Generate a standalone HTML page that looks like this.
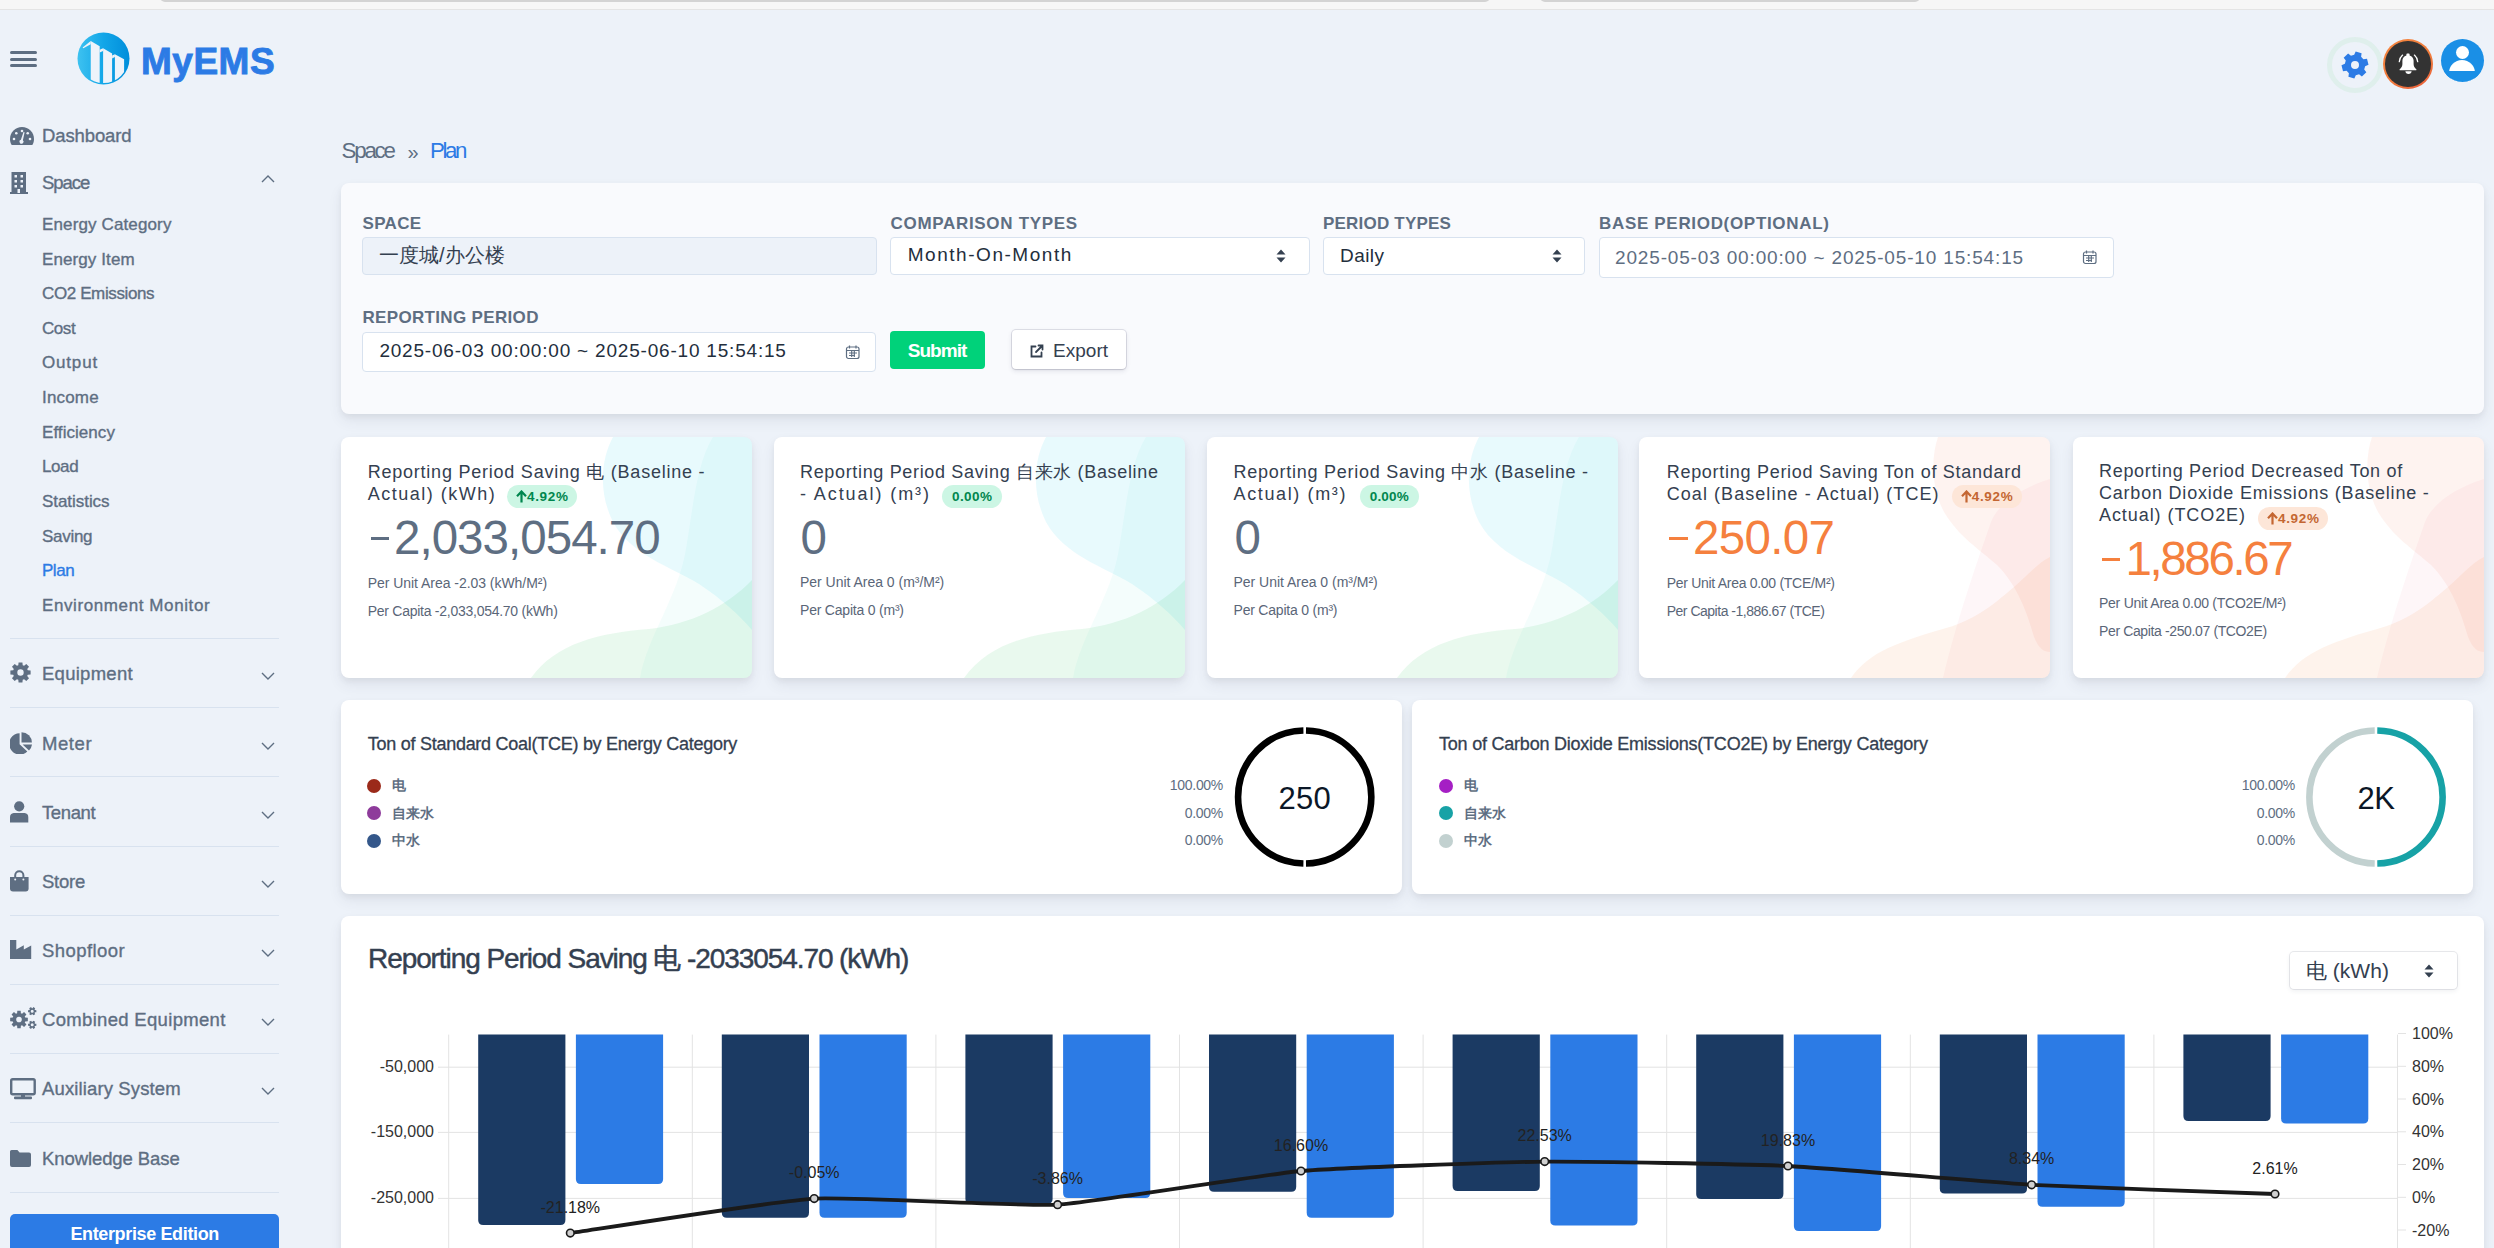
<!DOCTYPE html><html><head><meta charset="utf-8"><title>MyEMS</title><style>
*{box-sizing:border-box;margin:0;padding:0}
html,body{width:2494px;height:1248px;overflow:hidden;background:#edf2f9;font-family:"Liberation Sans",sans-serif;color:#344050}
.a{position:absolute}
.t{position:absolute;white-space:nowrap;line-height:1}
.tb{position:absolute;top:-3px;height:5px;background:#d3d3d3;border-radius:0 0 7px 7px}
.sd{position:absolute;white-space:nowrap;line-height:1;color:#5e6e82;font-size:17px;-webkit-text-stroke:0.35px currentColor}
.sep{position:absolute;left:10px;width:269px;height:1px;background:#d8e2ef}
.card{position:absolute;background:#fff;border-radius:8px;box-shadow:0 7px 14px 0 rgba(65,69,88,.08),0 3px 6px 0 rgba(0,0,0,.05)}
.lbl{position:absolute;white-space:nowrap;line-height:1;font-size:17px;font-weight:bold;color:#5e6e82;letter-spacing:0.6px}
.inp{position:absolute;border:1px solid #d8e2ef;border-radius:4px;background:#fff}
.chev{position:absolute;width:9px;height:9px;border-right:1.5px solid #5e6e82;border-bottom:1.5px solid #5e6e82}
</style></head><body>
<div class="a" style="left:0;top:0;width:2494px;height:10px;background:#f6f6f6;border-bottom:1px solid #e4e4e4"></div>
<div class="tb" style="left:160px;width:1330px"></div>
<div class="tb" style="left:1540px;width:380px"></div>
<div class="a" style="left:10px;top:51px;width:27px;height:3px;border-radius:2px;background:#5d6e82"></div>
<div class="a" style="left:10px;top:57.5px;width:27px;height:3px;border-radius:2px;background:#5d6e82"></div>
<div class="a" style="left:10px;top:64px;width:27px;height:3px;border-radius:2px;background:#5d6e82"></div>
<svg class="a" style="left:77px;top:32px" width="53" height="53" viewBox="0 0 53 53">
<defs><linearGradient id="lg" x1="0" y1="0" x2="1" y2="0"><stop offset="0" stop-color="#3ec2f0"/><stop offset="0.5" stop-color="#12a6e8"/><stop offset="1" stop-color="#008edb"/></linearGradient>
<clipPath id="cc"><circle cx="26.5" cy="26.5" r="24.6"/></clipPath></defs>
<circle cx="26.5" cy="26.5" r="26" fill="url(#lg)"/>
<g clip-path="url(#cc)" fill="#eef3fa">
<path d="M5.6 15.6 L13.75 9 V12.2 L6.4 16.2 Z"/>
<path d="M13.75 9 L22.7 14.3 V60 H13.75 Z"/>
<path d="M22.7 17.7 L26.1 16.3 V18.9 L22.7 20.5 Z"/>
<path d="M26.1 16.3 L35.1 21.6 V60 H26.1 Z"/>
<path d="M35.1 23.6 L37.9 22.2 V25 L35.1 26.4 Z"/>
<path d="M37.9 22.2 L47.1 27.2 V60 H37.9 Z"/>
</g></svg>
<div class="t" style="left:141px;top:43px;font-size:37px;font-weight:bold;color:#2c7be5;letter-spacing:0.5px;-webkit-text-stroke:0.9px #2c7be5">MyEMS</div>
<div class="a" style="left:2327px;top:36.5px;width:56px;height:56px;border-radius:50%;border:5px solid #dfefec"></div>

<svg class="a" style="left:2341px;top:50.5px" width="28" height="28" viewBox="0 0 28 28"><path fill="#2c7be5" fill-rule="evenodd" d="M13.19 3.83 L14.67 0.52 L20.59 2.22 L20.09 5.82 L22.40 8.21 L26.01 7.84 L27.50 13.82 L24.13 15.18 L23.21 18.38 L25.34 21.32 L20.90 25.60 L18.04 23.37 L14.81 24.17 L13.33 27.48 L7.41 25.78 L7.91 22.18 L5.60 19.79 L1.99 20.16 L0.50 14.18 L3.87 12.82 L4.79 9.62 L2.66 6.68 L7.10 2.40 L9.96 4.63Z M18.00 14.00 A4 4 0 1 0 10.00 14.00 A4 4 0 1 0 18.00 14.00Z"/></svg>

<div class="a" style="left:2383px;top:39px;width:50px;height:50px;border-radius:50%;background:linear-gradient(150deg,#f5863e 0%,#f07a3c 60%,#e85a3a 100%);"></div>
<div class="a" style="left:2385.2px;top:41.2px;width:45.6px;height:45.6px;border-radius:50%;background:#333"></div>
<svg class="a" style="left:2398px;top:53px" width="22" height="22" viewBox="0 0 22 22">
<path fill="#fff" d="M10.5 0.6c.7 0 1.1.4 1.1 1v.9c2.5.6 4 2.8 4 5.3v3.2c0 1.7.7 3.2 1.9 4.4l.8.8c.4.5.1 1.1-.5 1.1H2.2c-.6 0-.9-.6-.5-1.1l.8-.8c1.200-1.200 1.900-2.700 1.900-4.400V7.800c0-2.500 1.500-4.700 4-5.300v-.9c0-.6.4-1 1.1-1z"/>
<path fill="#fff" d="M7.400 18.300h6.200c0 1.500-1.400 2.700-3.100 2.700s-3.100-1.200-3.100-2.700z"/>
<path fill="none" stroke="#fff" stroke-width="1.3" stroke-linecap="round" d="M1.300 8.700c.2-2.600 1.400-4.900 3.300-6.600M19.700 8.700c-.2-2.600-1.400-4.900-3.300-6.600"/>
</svg>
<div class="a" style="left:2440.5px;top:38.5px;width:43px;height:43px;border-radius:50%;background:#1a8fe6;overflow:hidden">
<div class="a" style="left:15px;top:7px;width:13px;height:13px;border-radius:50%;background:#fff"></div>
<div class="a" style="left:8.5px;top:21.5px;width:26px;height:26px;border-radius:50%;background:#fff"></div>
<div class="a" style="left:0;top:32.5px;width:43px;height:12px;background:#1a8fe6"></div>
</div>
<div class="sd" style="left:42px;top:127.3px;font-size:18.5px;color:#5e6e82;font-weight:normal;letter-spacing:-0.11px">Dashboard</div>
<div class="sd" style="left:42px;top:173.6px;font-size:18.5px;color:#5e6e82;font-weight:normal;letter-spacing:-1.03px">Space</div>
<div class="sd" style="left:42px;top:215.9px;font-size:17px;color:#5e6e82;font-weight:normal;letter-spacing:0.13px">Energy Category</div>
<div class="sd" style="left:42px;top:250.5px;font-size:17px;color:#5e6e82;font-weight:normal;letter-spacing:0.10px">Energy Item</div>
<div class="sd" style="left:42px;top:285.1px;font-size:17px;color:#5e6e82;font-weight:normal;letter-spacing:-0.38px">CO2 Emissions</div>
<div class="sd" style="left:42px;top:319.8px;font-size:17px;color:#5e6e82;font-weight:normal;letter-spacing:-0.45px">Cost</div>
<div class="sd" style="left:42px;top:354.4px;font-size:17px;color:#5e6e82;font-weight:normal;letter-spacing:0.82px">Output</div>
<div class="sd" style="left:42px;top:389.0px;font-size:17px;color:#5e6e82;font-weight:normal;letter-spacing:0.17px">Income</div>
<div class="sd" style="left:42px;top:423.6px;font-size:17px;color:#5e6e82;font-weight:normal;letter-spacing:0.05px">Efficiency</div>
<div class="sd" style="left:42px;top:458.2px;font-size:17px;color:#5e6e82;font-weight:normal;letter-spacing:-0.40px">Load</div>
<div class="sd" style="left:42px;top:492.9px;font-size:17px;color:#5e6e82;font-weight:normal;letter-spacing:-0.05px">Statistics</div>
<div class="sd" style="left:42px;top:527.5px;font-size:17px;color:#5e6e82;font-weight:normal;letter-spacing:-0.28px">Saving</div>
<div class="sd" style="left:42px;top:562.1px;font-size:17px;color:#2c7be5;font-weight:normal;letter-spacing:-0.48px">Plan</div>
<div class="sd" style="left:42px;top:596.7px;font-size:17px;color:#5e6e82;font-weight:normal;letter-spacing:0.60px">Environment Monitor</div>
<svg class="a" style="left:10px;top:126px" width="24" height="20" viewBox="0 0 24 20"><path fill="#5e6e82" d="M12 1C5.4 1 0 6.400 0 13c0 2.200.6 4.300 1.700 6h20.600c1.100-1.700 1.700-3.800 1.700-6 0-6.600-5.400-12-12-12z"/>
<g fill="#edf2f9"><circle cx="4" cy="13" r="1.3"/><circle cx="6.3" cy="7.3" r="1.3"/><circle cx="12" cy="5" r="1.3"/><circle cx="20" cy="13" r="1.3"/><circle cx="17.7" cy="7.3" r="1.3"/><path d="M14.600 6.200 L12.900 14.200 a2 2 0 1 1 -2-.4 L13.500 5.900z"/></g></svg>
<svg class="a" style="left:10px;top:172px" width="18" height="22" viewBox="0 0 18 22"><path fill="#5e6e82" d="M1.500 0h14.500v21H1.500z"/><rect x="0" y="20" width="18" height="2" fill="#5e6e82"/>
<g fill="#edf2f9"><rect x="4.5" y="3" width="2.5" height="2.5"/><rect x="10.5" y="3" width="2.5" height="2.5"/><rect x="4.5" y="8" width="2.5" height="2.5"/><rect x="10.5" y="8" width="2.5" height="2.5"/><rect x="4.5" y="13" width="2.5" height="2.5"/><rect x="10.5" y="13" width="2.5" height="2.5"/><rect x="7.5" y="17" width="2.5" height="4"/></g></svg>
<svg class="a" style="left:260px;top:172px" width="16" height="12" viewBox="0 0 16 12"><path d="M2 10 L8 4 L14 10" fill="none" stroke="#5e6e82" stroke-width="1.4"/></svg>
<div class="sep" style="top:638.4px"></div>
<div class="sep" style="top:707.0px"></div>
<div class="sep" style="top:776.0px"></div>
<div class="sep" style="top:845.8px"></div>
<div class="sep" style="top:915.0px"></div>
<div class="sep" style="top:984.0px"></div>
<div class="sep" style="top:1053.0px"></div>
<div class="sep" style="top:1122.0px"></div>
<div class="sep" style="top:1192.0px"></div>
<div class="sd" style="left:42px;top:665.3px;font-size:18.5px;color:#5e6e82;font-weight:normal;letter-spacing:0.27px">Equipment</div>
<svg class="a" style="left:260px;top:670.1px" width="16" height="12" viewBox="0 0 16 12"><path d="M2 3 L8 9 L14 3" fill="none" stroke="#5e6e82" stroke-width="1.4"/></svg>
<div class="sd" style="left:42px;top:734.7px;font-size:18.5px;color:#5e6e82;font-weight:normal;letter-spacing:0.58px">Meter</div>
<svg class="a" style="left:260px;top:739.5px" width="16" height="12" viewBox="0 0 16 12"><path d="M2 3 L8 9 L14 3" fill="none" stroke="#5e6e82" stroke-width="1.4"/></svg>
<div class="sd" style="left:42px;top:803.7px;font-size:18.5px;color:#5e6e82;font-weight:normal;letter-spacing:-0.39px">Tenant</div>
<svg class="a" style="left:260px;top:808.5px" width="16" height="12" viewBox="0 0 16 12"><path d="M2 3 L8 9 L14 3" fill="none" stroke="#5e6e82" stroke-width="1.4"/></svg>
<div class="sd" style="left:42px;top:872.7px;font-size:18.5px;color:#5e6e82;font-weight:normal;letter-spacing:-0.25px">Store</div>
<svg class="a" style="left:260px;top:877.5px" width="16" height="12" viewBox="0 0 16 12"><path d="M2 3 L8 9 L14 3" fill="none" stroke="#5e6e82" stroke-width="1.4"/></svg>
<div class="sd" style="left:42px;top:941.7px;font-size:18.5px;color:#5e6e82;font-weight:normal;letter-spacing:0.43px">Shopfloor</div>
<svg class="a" style="left:260px;top:946.5px" width="16" height="12" viewBox="0 0 16 12"><path d="M2 3 L8 9 L14 3" fill="none" stroke="#5e6e82" stroke-width="1.4"/></svg>
<div class="sd" style="left:42px;top:1010.7px;font-size:18.5px;color:#5e6e82;font-weight:normal;letter-spacing:0.32px">Combined Equipment</div>
<svg class="a" style="left:260px;top:1015.5px" width="16" height="12" viewBox="0 0 16 12"><path d="M2 3 L8 9 L14 3" fill="none" stroke="#5e6e82" stroke-width="1.4"/></svg>
<div class="sd" style="left:42px;top:1079.7px;font-size:18.5px;color:#5e6e82;font-weight:normal;letter-spacing:0.13px">Auxiliary System</div>
<svg class="a" style="left:260px;top:1084.5px" width="16" height="12" viewBox="0 0 16 12"><path d="M2 3 L8 9 L14 3" fill="none" stroke="#5e6e82" stroke-width="1.4"/></svg>
<div class="sd" style="left:42px;top:1149.7px;font-size:18.5px;color:#5e6e82;font-weight:normal;letter-spacing:-0.09px">Knowledge Base</div>
<div class="t" style="left:341.5px;top:139.9px;font-size:22.3px;color:#5e6e82;letter-spacing:-2.19px;">Space</div>
<div class="t" style="left:407.5px;top:141.9px;font-size:20px;color:#5e6e82;letter-spacing:0.00px;">»</div>
<div class="t" style="left:430px;top:139.9px;font-size:22.3px;color:#2c7be5;letter-spacing:-2.45px;">Plan</div>
<div class="card" style="left:341px;top:183px;width:2143px;height:231px;background:#f9fafd"></div>
<div class="t" style="left:362.5px;top:214.6px;font-size:17px;color:#5e6e82;font-weight:bold;letter-spacing:0.35px;">SPACE</div>
<div class="t" style="left:890.5px;top:214.6px;font-size:17px;color:#5e6e82;font-weight:bold;letter-spacing:0.69px;">COMPARISON TYPES</div>
<div class="t" style="left:1323px;top:214.6px;font-size:17px;color:#5e6e82;font-weight:bold;letter-spacing:0.21px;">PERIOD TYPES</div>
<div class="t" style="left:1599px;top:214.6px;font-size:17px;color:#5e6e82;font-weight:bold;letter-spacing:0.68px;">BASE PERIOD(OPTIONAL)</div>
<div class="t" style="left:362.5px;top:308.6px;font-size:17px;color:#5e6e82;font-weight:bold;letter-spacing:0.33px;">REPORTING PERIOD</div>
<div class="inp" style="left:362px;top:237px;width:515px;height:38px;background:#edf2f9;border-color:#d8e2ef"></div>
<div class="t" style="left:379px;top:245.1px;font-size:20px;color:#344050;letter-spacing:0.00px;">一度城/办公楼</div>
<div class="inp" style="left:890px;top:237px;width:420px;height:38px"></div>
<div class="t" style="left:907.7px;top:244.8px;font-size:19px;color:#232e3c;letter-spacing:1.54px;">Month-On-Month</div>
<div class="inp" style="left:1323px;top:237px;width:262px;height:38px"></div>
<div class="t" style="left:1340px;top:245.7px;font-size:19px;color:#232e3c;letter-spacing:0.45px;">Daily</div>
<svg class="a" style="left:1275px;top:247.5px" width="12" height="16" viewBox="0 0 12 16"><path d="M6 1.5 L10.5 6.5 H1.5Z M6 14.5 L10.5 9.5 H1.5Z" fill="#344050"/></svg>
<svg class="a" style="left:1551px;top:247.5px" width="12" height="16" viewBox="0 0 12 16"><path d="M6 1.5 L10.5 6.5 H1.5Z M6 14.5 L10.5 9.5 H1.5Z" fill="#344050"/></svg>
<div class="inp" style="left:1599px;top:237px;width:515px;height:41px;border-color:#d8e2ef"></div>
<div class="t" style="left:1615px;top:248.2px;font-size:19px;color:#5e6e82;letter-spacing:0.84px;">2025-05-03 00:00:00 ~ 2025-05-10 15:54:15</div>
<svg class="a" style="left:2082px;top:249px" width="16" height="16" viewBox="0 0 16 16"><g fill="none" stroke="#5e6e82" stroke-width="1.2"><rect x="1.5" y="3" width="12.5" height="11.5" rx="2"/><path d="M1.5 6.5H14M4.5 1.5v3M11 1.5v3M4 9h8M4 11.5h6M6.7 7v6M9.3 7v6"/></g></svg>
<div class="inp" style="left:362px;top:332px;width:514px;height:40px"></div>
<div class="t" style="left:379.4px;top:340.9px;font-size:19px;color:#232e3c;letter-spacing:0.80px;">2025-06-03 00:00:00 ~ 2025-06-10 15:54:15</div>
<svg class="a" style="left:845px;top:344px" width="16" height="16" viewBox="0 0 16 16"><g fill="none" stroke="#5e6e82" stroke-width="1.2"><rect x="1.5" y="3" width="12.5" height="11.5" rx="2"/><path d="M1.5 6.5H14M4.5 1.5v3M11 1.5v3M4 9h8M4 11.5h6M6.7 7v6M9.3 7v6"/></g></svg>
<div class="a" style="left:890px;top:331px;width:95px;height:38px;border-radius:4px;background:#00d27a"></div>
<div class="t" style="left:907.7px;top:340.9px;font-size:19px;color:#fff;font-weight:bold;letter-spacing:-0.96px;">Submit</div>
<div class="a" style="left:1011.5px;top:330px;width:114px;height:39px;border-radius:4px;background:#fff;box-shadow:0 0 0 1px rgba(43,45,80,.12),0 2px 5px 0 rgba(43,45,80,.12),0 1px 1.5px 0 rgba(0,0,0,.07)"></div>
<svg class="a" style="left:1029px;top:343px" width="16" height="16" viewBox="0 0 16 16"><g fill="none" stroke="#344050" stroke-width="1.8" stroke-linecap="round"><path d="M12.5 9.5v4H2.5v-10h4"/><path d="M9.5 2.5h4v4M13.5 2.5L7 9"/></g></svg>
<div class="t" style="left:1053px;top:340.9px;font-size:19px;color:#344050;letter-spacing:0.02px;">Export</div>
<div class="card" style="left:341.2px;top:437px;width:411px;height:241px;overflow:hidden"><svg class="a" style="left:0;top:0" width="411" height="241" viewBox="0 0 411 241">
<path d="M272 0 C260 22 257 55 272 85 C290 118 330 130 358 147 C382 163 398 178 411 193 V0Z" fill="rgb(0,200,230)" fill-opacity="0.09"/>
<path d="M372 0 C356 25 352 70 345 112 C337 160 306 200 299 241 H411 V0Z" fill="rgb(0,200,190)" fill-opacity="0.045"/>
<path d="M190 241 C215 206 258 196 308 192 C350 187 385 170 411 143 V241Z" fill="rgb(40,200,90)" fill-opacity="0.10"/>
</svg></div>
<div class="card" style="left:773.7px;top:437px;width:411px;height:241px;overflow:hidden"><svg class="a" style="left:0;top:0" width="411" height="241" viewBox="0 0 411 241">
<path d="M272 0 C260 22 257 55 272 85 C290 118 330 130 358 147 C382 163 398 178 411 193 V0Z" fill="rgb(0,200,230)" fill-opacity="0.09"/>
<path d="M372 0 C356 25 352 70 345 112 C337 160 306 200 299 241 H411 V0Z" fill="rgb(0,200,190)" fill-opacity="0.045"/>
<path d="M190 241 C215 206 258 196 308 192 C350 187 385 170 411 143 V241Z" fill="rgb(40,200,90)" fill-opacity="0.10"/>
</svg></div>
<div class="card" style="left:1207px;top:437px;width:411px;height:241px;overflow:hidden"><svg class="a" style="left:0;top:0" width="411" height="241" viewBox="0 0 411 241">
<path d="M272 0 C260 22 257 55 272 85 C290 118 330 130 358 147 C382 163 398 178 411 193 V0Z" fill="rgb(0,200,230)" fill-opacity="0.09"/>
<path d="M372 0 C356 25 352 70 345 112 C337 160 306 200 299 241 H411 V0Z" fill="rgb(0,200,190)" fill-opacity="0.045"/>
<path d="M190 241 C215 206 258 196 308 192 C350 187 385 170 411 143 V241Z" fill="rgb(40,200,90)" fill-opacity="0.10"/>
</svg></div>
<div class="card" style="left:1639px;top:437px;width:411px;height:241px;overflow:hidden"><svg class="a" style="left:0;top:0" width="411" height="241" viewBox="0 0 411 241">
<path d="M299 0 C292 20 292 50 305 75 C320 100 340 112 358 128 C378 148 388 175 395 200 C400 212 405 215 411 215 V0Z" fill="rgb(245,120,90)" fill-opacity="0.09"/>
<path d="M411 42 C385 50 360 65 352 85 C340 120 320 175 304 241 H411Z" fill="rgb(240,90,130)" fill-opacity="0.055"/>
<path d="M212 241 C230 215 258 205 314 189 C345 178 365 158 375 150 C390 137 400 125 411 120 V241Z" fill="rgb(250,150,80)" fill-opacity="0.11"/>
</svg></div>
<div class="card" style="left:2072.5px;top:437px;width:411px;height:241px;overflow:hidden"><svg class="a" style="left:0;top:0" width="411" height="241" viewBox="0 0 411 241">
<path d="M299 0 C292 20 292 50 305 75 C320 100 340 112 358 128 C378 148 388 175 395 200 C400 212 405 215 411 215 V0Z" fill="rgb(245,120,90)" fill-opacity="0.09"/>
<path d="M411 42 C385 50 360 65 352 85 C340 120 320 175 304 241 H411Z" fill="rgb(240,90,130)" fill-opacity="0.055"/>
<path d="M212 241 C230 215 258 205 314 189 C345 178 365 158 375 150 C390 137 400 125 411 120 V241Z" fill="rgb(250,150,80)" fill-opacity="0.11"/>
</svg></div>
<div class="t" style="left:367.7px;top:462.6px;font-size:18px;color:#344050;letter-spacing:0.77px;">Reporting Period Saving 电 (Baseline -</div>
<div class="t" style="left:367.7px;top:485.3px;font-size:18px;color:#344050;letter-spacing:1.50px;">Actual) (kWh)</div>
<div class="a" style="left:507px;top:485px;width:70px;height:23px;border-radius:11.5px;background:#ccf6e4"></div>
<svg class="a" style="left:516px;top:490px" width="11" height="13" viewBox="0 0 11 13"><path d="M5.5 12.5V2M1 6.2L5.5 1.5L10 6.2" fill="none" stroke="#00864e" stroke-width="2.2" stroke-linejoin="miter"/></svg>
<div class="t" style="left:527px;top:490.1px;font-size:13.5px;color:#00864e;font-weight:bold;letter-spacing:0.68px;">4.92%</div>
<div class="a" style="left:371px;top:536.5px;width:17.6px;height:3.2px;background:#5e6e82"></div>
<div class="t" style="left:394px;top:514.1px;font-size:47.5px;color:#5e6e82;letter-spacing:-0.97px;">2,033,054.70</div>
<div class="t" style="left:367.7px;top:575.6px;font-size:14px;color:#5a6678;letter-spacing:-0.04px;">Per Unit Area -2.03 (kWh/M²)</div>
<div class="t" style="left:367.7px;top:603.5px;font-size:14px;color:#5a6678;letter-spacing:-0.26px;">Per Capita -2,033,054.70 (kWh)</div>
<div class="t" style="left:800px;top:462.6px;font-size:18px;color:#344050;letter-spacing:0.66px;">Reporting Period Saving 自来水 (Baseline</div>
<div class="t" style="left:800px;top:485.3px;font-size:18px;color:#344050;letter-spacing:1.92px;">- Actual) (m³)</div>
<div class="a" style="left:942px;top:485px;width:60px;height:23px;border-radius:11.5px;background:#ccf6e4"></div>
<div class="t" style="left:952px;top:490.1px;font-size:13.5px;color:#00864e;font-weight:bold;letter-spacing:0.43px;">0.00%</div>
<div class="t" style="left:800.6px;top:514.1px;font-size:47.5px;color:#5e6e82;letter-spacing:-1.92px;">0</div>
<div class="t" style="left:800px;top:575.2px;font-size:14px;color:#5a6678;letter-spacing:-0.02px;">Per Unit Area 0 (m³/M²)</div>
<div class="t" style="left:800px;top:603.2px;font-size:14px;color:#5a6678;letter-spacing:-0.21px;">Per Capita 0 (m³)</div>
<div class="t" style="left:1233.5px;top:462.6px;font-size:18px;color:#344050;letter-spacing:0.74px;">Reporting Period Saving 中水 (Baseline -</div>
<div class="t" style="left:1233.5px;top:485.3px;font-size:18px;color:#344050;letter-spacing:1.63px;">Actual) (m³)</div>
<div class="a" style="left:1359.7px;top:485px;width:59px;height:23px;border-radius:11.5px;background:#ccf6e4"></div>
<div class="t" style="left:1369.7px;top:490.1px;font-size:13.5px;color:#00864e;font-weight:bold;letter-spacing:0.18px;">0.00%</div>
<div class="t" style="left:1234.5px;top:514.1px;font-size:47.5px;color:#5e6e82;letter-spacing:-1.92px;">0</div>
<div class="t" style="left:1233.5px;top:575.2px;font-size:14px;color:#5a6678;letter-spacing:-0.02px;">Per Unit Area 0 (m³/M²)</div>
<div class="t" style="left:1233.5px;top:603.2px;font-size:14px;color:#5a6678;letter-spacing:-0.21px;">Per Capita 0 (m³)</div>
<div class="t" style="left:1666.7px;top:462.6px;font-size:18px;color:#344050;letter-spacing:0.72px;">Reporting Period Saving Ton of Standard</div>
<div class="t" style="left:1666.7px;top:485.3px;font-size:18px;color:#344050;letter-spacing:1.06px;">Coal (Baseline - Actual) (TCE)</div>
<div class="a" style="left:1951.7px;top:485px;width:70px;height:23px;border-radius:11.5px;background:#fde6d8"></div>
<svg class="a" style="left:1960.7px;top:490px" width="11" height="13" viewBox="0 0 11 13"><path d="M5.5 12.5V2M1 6.2L5.5 1.5L10 6.2" fill="none" stroke="#c46632" stroke-width="2.2" stroke-linejoin="miter"/></svg>
<div class="t" style="left:1971.7px;top:490.1px;font-size:13.5px;color:#c46632;font-weight:bold;letter-spacing:0.68px;">4.92%</div>
<div class="a" style="left:1669px;top:536.5px;width:19.0px;height:3.2px;background:#f5803e"></div>
<div class="t" style="left:1693px;top:514.1px;font-size:47.5px;color:#f5803e;letter-spacing:-0.66px;">250.07</div>
<div class="t" style="left:1666.7px;top:575.6px;font-size:14px;color:#5a6678;letter-spacing:-0.29px;">Per Unit Area 0.00 (TCE/M²)</div>
<div class="t" style="left:1666.7px;top:603.5px;font-size:14px;color:#5a6678;letter-spacing:-0.49px;">Per Capita -1,886.67 (TCE)</div>
<div class="t" style="left:2099px;top:461.8px;font-size:18px;color:#344050;letter-spacing:0.70px;">Reporting Period Decreased Ton of</div>
<div class="t" style="left:2099px;top:483.6px;font-size:18px;color:#344050;letter-spacing:0.79px;">Carbon Dioxide Emissions (Baseline -</div>
<div class="t" style="left:2099px;top:505.5px;font-size:18px;color:#344050;letter-spacing:0.93px;">Actual) (TCO2E)</div>
<div class="a" style="left:2258px;top:506.5px;width:70px;height:23px;border-radius:11.5px;background:#fde6d8"></div>
<svg class="a" style="left:2267px;top:511.5px" width="11" height="13" viewBox="0 0 11 13"><path d="M5.5 12.5V2M1 6.2L5.5 1.5L10 6.2" fill="none" stroke="#c46632" stroke-width="2.2" stroke-linejoin="miter"/></svg>
<div class="t" style="left:2278px;top:511.6px;font-size:13.5px;color:#c46632;font-weight:bold;letter-spacing:0.68px;">4.92%</div>
<div class="a" style="left:2101.5px;top:557.5px;width:18.5px;height:3.2px;background:#f5803e"></div>
<div class="t" style="left:2125.5px;top:535.1px;font-size:47.5px;color:#f5803e;letter-spacing:-2.39px;">1,886.67</div>
<div class="t" style="left:2099px;top:595.9px;font-size:14px;color:#5a6678;letter-spacing:-0.26px;">Per Unit Area 0.00 (TCO2E/M²)</div>
<div class="t" style="left:2099px;top:623.9px;font-size:14px;color:#5a6678;letter-spacing:-0.37px;">Per Capita -250.07 (TCO2E)</div>
<svg class="a" style="left:10px;top:661.5px" width="21" height="21" viewBox="0 0 21 21"><path fill="#5e6e82" fill-rule="evenodd" d="M17.77 8.29 L20.62 8.57 L20.62 12.43 L17.77 12.71 L17.20 14.08 L19.02 16.29 L16.29 19.02 L14.08 17.20 L12.71 17.77 L12.43 20.62 L8.57 20.62 L8.29 17.77 L6.92 17.20 L4.71 19.02 L1.98 16.29 L3.80 14.08 L3.23 12.71 L0.38 12.43 L0.38 8.57 L3.23 8.29 L3.80 6.92 L1.98 4.71 L4.71 1.98 L6.92 3.80 L8.29 3.23 L8.57 0.38 L12.43 0.38 L12.71 3.23 L14.08 3.80 L16.29 1.98 L19.02 4.71 L17.20 6.92Z M13.70 10.50 A3.2 3.2 0 1 0 7.30 10.50 A3.2 3.2 0 1 0 13.70 10.50Z"/></svg>
<svg class="a" style="left:10px;top:731.5px" width="23" height="22" viewBox="0 0 23 22"><path fill="#5e6e82" d="M9.6 1.2 V12.2 L17.3 19.6 A10.7 10.7 0 1 1 9.6 1.2Z"/><path fill="#5e6e82" d="M11.5 0.2 A10.4 10.4 0 0 1 21.9 10.6 H11.5Z"/><path fill="#5e6e82" d="M12.6 12.5 H22 A10.6 10.6 0 0 1 19 18.6Z"/></svg>
<svg class="a" style="left:10px;top:800.5px" width="19" height="22" viewBox="0 0 19 22"><circle cx="9.2" cy="5.3" r="5.1" fill="#5e6e82"/><path fill="#5e6e82" d="M3.8 12 H14.6 A4.3 4.3 0 0 1 18.3 16.3 V21.5 H0 V16.3 A4.3 4.3 0 0 1 3.8 12Z"/></svg>
<svg class="a" style="left:10px;top:869.5px" width="19" height="22" viewBox="0 0 19 22"><path fill="none" stroke="#5e6e82" stroke-width="2" d="M5.2 7.5 V5.3 A4.1 4.1 0 0 1 13.4 5.3 V7.5"/><path fill="#5e6e82" d="M0 7 H18.6 V18.5 A3 3 0 0 1 15.6 21.5 H3 A3 3 0 0 1 0 18.5Z"/><circle cx="5.2" cy="9.5" r="1" fill="#edf2f9"/><circle cx="13.4" cy="9.5" r="1" fill="#edf2f9"/></svg>
<svg class="a" style="left:10px;top:940px" width="22" height="20" viewBox="0 0 22 20"><path fill="#5e6e82" d="M0 0 H6.3 V9.5 L13.8 5.2 V9.5 L21.2 5.4 V19 H0Z"/></svg>
<svg class="a" style="left:10px;top:1007px" width="28" height="23" viewBox="0 0 28 23"><path fill="#5e6e82" fill-rule="evenodd" d="M15.22 10.61 L17.84 10.81 L17.84 14.19 L15.22 14.39 L14.73 15.56 L16.44 17.56 L14.06 19.94 L12.06 18.23 L10.89 18.72 L10.69 21.34 L7.31 21.34 L7.11 18.72 L5.94 18.23 L3.94 19.94 L1.56 17.56 L3.27 15.56 L2.78 14.39 L0.16 14.19 L0.16 10.81 L2.78 10.61 L3.27 9.44 L1.56 7.44 L3.94 5.06 L5.94 6.77 L7.11 6.28 L7.31 3.66 L10.69 3.66 L10.89 6.28 L12.06 6.77 L14.06 5.06 L16.44 7.44 L14.73 9.44Z M11.80 12.50 A2.8 2.8 0 1 0 6.20 12.50 A2.8 2.8 0 1 0 11.80 12.50Z"/><path fill="#5e6e82" fill-rule="evenodd" d="M24.97 3.05 L26.36 3.13 L26.36 5.27 L24.97 5.35 L24.58 6.03 L25.21 7.27 L23.36 8.34 L22.59 7.17 L21.81 7.17 L21.04 8.34 L19.19 7.27 L19.82 6.03 L19.43 5.35 L18.04 5.27 L18.04 3.13 L19.43 3.05 L19.82 2.37 L19.19 1.13 L21.04 0.06 L21.81 1.23 L22.59 1.23 L23.36 0.06 L25.21 1.13 L24.58 2.37Z M23.70 4.20 A1.5 1.5 0 1 0 20.70 4.20 A1.5 1.5 0 1 0 23.70 4.20Z"/><path fill="#5e6e82" fill-rule="evenodd" d="M24.97 16.65 L26.36 16.73 L26.36 18.87 L24.97 18.95 L24.58 19.63 L25.21 20.87 L23.36 21.94 L22.59 20.77 L21.81 20.77 L21.04 21.94 L19.19 20.87 L19.82 19.63 L19.43 18.95 L18.04 18.87 L18.04 16.73 L19.43 16.65 L19.82 15.97 L19.19 14.73 L21.04 13.66 L21.81 14.83 L22.59 14.83 L23.36 13.66 L25.21 14.73 L24.58 15.97Z M23.70 17.80 A1.5 1.5 0 1 0 20.70 17.80 A1.5 1.5 0 1 0 23.70 17.80Z"/></svg>
<svg class="a" style="left:10px;top:1077.5px" width="26" height="22" viewBox="0 0 26 22"><rect x="1.2" y="1.2" width="23.5" height="15" rx="1.5" fill="none" stroke="#5e6e82" stroke-width="2.4"/><rect x="11" y="16" width="4" height="3.5" fill="#5e6e82"/><rect x="4" y="18.5" width="18" height="2.8" rx="1" fill="#5e6e82"/></svg>
<svg class="a" style="left:10px;top:1149.5px" width="21" height="17" viewBox="0 0 21 17"><path fill="#5e6e82" d="M1.6 0 H7.4 L9.6 2.4 H19 A2 2 0 0 1 21 4.4 V15 A2 2 0 0 1 19 17 H2 A2 2 0 0 1 0 15 V1.6 A1.6 1.6 0 0 1 1.6 0Z"/></svg>
<div class="a" style="left:10px;top:1214px;width:269px;height:50px;border-radius:5px;background:#2c7be5"></div>
<div class="t" style="left:70.4px;top:1225.0px;font-size:18px;color:#fff;font-weight:bold;letter-spacing:-0.36px;">Enterprise Edition</div>
<div class="card" style="left:341px;top:700px;width:1061px;height:194px"></div>
<div class="card" style="left:1412px;top:700px;width:1060.5px;height:193.5px"></div>
<div class="t" style="left:367.8px;top:734.8px;font-size:18px;color:#344050;letter-spacing:-0.27px;-webkit-text-stroke:0.3px #344050">Ton of Standard Coal(TCE) by Energy Category</div>
<div class="t" style="left:1439px;top:734.8px;font-size:18px;color:#344050;letter-spacing:-0.22px;-webkit-text-stroke:0.3px #344050">Ton of Carbon Dioxide Emissions(TCO2E) by Energy Category</div>
<div class="a" style="left:367px;top:778.5px;width:14px;height:14px;border-radius:50%;background:#9b2a1a"></div>
<div class="t" style="left:392px;top:778.0px;font-size:14px;font-weight:bold;color:#5e6e82">电</div>
<div class="t" style="left:1143px;width:80px;text-align:right;top:778.0px;font-size:14px;color:#5e6e82;letter-spacing:-0.3px">100.00%</div>
<div class="a" style="left:367px;top:806px;width:14px;height:14px;border-radius:50%;background:#8e3b9b"></div>
<div class="t" style="left:392px;top:805.5px;font-size:14px;font-weight:bold;color:#5e6e82">自来水</div>
<div class="t" style="left:1143px;width:80px;text-align:right;top:805.5px;font-size:14px;color:#5e6e82;letter-spacing:-0.3px">0.00%</div>
<div class="a" style="left:367px;top:833.5px;width:14px;height:14px;border-radius:50%;background:#34578a"></div>
<div class="t" style="left:392px;top:833.0px;font-size:14px;font-weight:bold;color:#5e6e82">中水</div>
<div class="t" style="left:1143px;width:80px;text-align:right;top:833.0px;font-size:14px;color:#5e6e82;letter-spacing:-0.3px">0.00%</div>
<div class="a" style="left:1438.5px;top:778.5px;width:14px;height:14px;border-radius:50%;background:#a51fc4"></div>
<div class="t" style="left:1463.5px;top:778.0px;font-size:14px;font-weight:bold;color:#5e6e82">电</div>
<div class="t" style="left:2215px;width:80px;text-align:right;top:778.0px;font-size:14px;color:#5e6e82;letter-spacing:-0.3px">100.00%</div>
<div class="a" style="left:1438.5px;top:806px;width:14px;height:14px;border-radius:50%;background:#17a2a6"></div>
<div class="t" style="left:1463.5px;top:805.5px;font-size:14px;font-weight:bold;color:#5e6e82">自来水</div>
<div class="t" style="left:2215px;width:80px;text-align:right;top:805.5px;font-size:14px;color:#5e6e82;letter-spacing:-0.3px">0.00%</div>
<div class="a" style="left:1438.5px;top:833.5px;width:14px;height:14px;border-radius:50%;background:#c2d1d0"></div>
<div class="t" style="left:1463.5px;top:833.0px;font-size:14px;font-weight:bold;color:#5e6e82">中水</div>
<div class="t" style="left:2215px;width:80px;text-align:right;top:833.0px;font-size:14px;color:#5e6e82;letter-spacing:-0.3px">0.00%</div>
<svg class="a" style="left:0;top:0" width="2494" height="1248" viewBox="0 0 2494 1248"><path d="M1305.98 730.51 A66.5 66.5 0 0 1 1305.98 863.49" fill="none" stroke="#000" stroke-width="6.6"/><path d="M1303.42 863.49 A66.5 66.5 0 0 1 1303.42 730.51" fill="none" stroke="#000" stroke-width="6.6"/></svg>
<div class="t" style="left:1244.7px;width:120px;text-align:center;top:782.7px;font-size:31px;color:#0b1727;letter-spacing:0.2px">250</div>
<svg class="a" style="left:0;top:0" width="2494" height="1248" viewBox="0 0 2494 1248"><path d="M2377.28 730.51 A66.5 66.5 0 0 1 2377.28 863.49" fill="none" stroke="#17a2a6" stroke-width="6.6"/><path d="M2374.72 863.49 A66.5 66.5 0 0 1 2374.72 730.51" fill="none" stroke="#c2d1d0" stroke-width="6.6"/></svg>
<div class="t" style="left:2316px;width:120px;text-align:center;top:782.7px;font-size:31px;color:#0b1727;letter-spacing:-0.5px">2K</div>
<div class="card" style="left:341px;top:916px;width:2143px;height:400px"></div>
<div class="t" style="left:368px;top:945.3px;font-size:28px;color:#344050;letter-spacing:-1.08px;-webkit-text-stroke:0.45px #344050">Reporting Period Saving 电 -2033054.70 (kWh)</div>
<div class="a" style="left:2289.5px;top:952px;width:167px;height:37px;border-radius:4px;background:#fff;box-shadow:0 0 0 1px rgba(43,45,80,.10),0 2px 5px 0 rgba(43,45,80,.08)"></div>
<div class="t" style="left:2305.7px;top:959.6px;font-size:21px;color:#344050;letter-spacing:0.08px;">电 (kWh)</div>
<svg class="a" style="left:2423.4px;top:962.8px" width="12" height="16" viewBox="0 0 12 16"><path d="M6 1.5 L10.5 6.5 H1.5Z M6 14.5 L10.5 9.5 H1.5Z" fill="#344050"/></svg>
<svg class="a" style="left:0;top:0" width="2494" height="1248" viewBox="0 0 2494 1248"><line x1="448.7" y1="1034.6" x2="448.7" y2="1248" stroke="#e3e3e3" stroke-width="1"/><line x1="692.3" y1="1034.6" x2="692.3" y2="1248" stroke="#e3e3e3" stroke-width="1"/><line x1="935.9" y1="1034.6" x2="935.9" y2="1248" stroke="#e3e3e3" stroke-width="1"/><line x1="1179.5" y1="1034.6" x2="1179.5" y2="1248" stroke="#e3e3e3" stroke-width="1"/><line x1="1423.1" y1="1034.6" x2="1423.1" y2="1248" stroke="#e3e3e3" stroke-width="1"/><line x1="1666.7" y1="1034.6" x2="1666.7" y2="1248" stroke="#e3e3e3" stroke-width="1"/><line x1="1910.3" y1="1034.6" x2="1910.3" y2="1248" stroke="#e3e3e3" stroke-width="1"/><line x1="2153.9" y1="1034.6" x2="2153.9" y2="1248" stroke="#e3e3e3" stroke-width="1"/><line x1="2397.5" y1="1034.6" x2="2397.5" y2="1248" stroke="#e3e3e3" stroke-width="1"/><line x1="438" y1="1067.2" x2="2398" y2="1067.2" stroke="#e3e3e3" stroke-width="1"/><line x1="438" y1="1132.4" x2="2398" y2="1132.4" stroke="#e3e3e3" stroke-width="1"/><line x1="438" y1="1198.4" x2="2398" y2="1198.4" stroke="#e3e3e3" stroke-width="1"/><line x1="2398" y1="1033.5" x2="2406" y2="1033.5" stroke="#e3e3e3" stroke-width="1"/><line x1="2398" y1="1066.3" x2="2406" y2="1066.3" stroke="#e3e3e3" stroke-width="1"/><line x1="2398" y1="1099.0" x2="2406" y2="1099.0" stroke="#e3e3e3" stroke-width="1"/><line x1="2398" y1="1131.8" x2="2406" y2="1131.8" stroke="#e3e3e3" stroke-width="1"/><line x1="2398" y1="1164.5" x2="2406" y2="1164.5" stroke="#e3e3e3" stroke-width="1"/><line x1="2398" y1="1197.3" x2="2406" y2="1197.3" stroke="#e3e3e3" stroke-width="1"/><line x1="2398" y1="1230.0" x2="2406" y2="1230.0" stroke="#e3e3e3" stroke-width="1"/><path d="M478.2 1034.6 H565.4 V1219.9 Q565.4 1224.9 560.4 1224.9 H483.2 Q478.2 1224.9 478.2 1219.9Z" fill="#1b3a63"/><path d="M575.9 1034.6 H663.1 V1179.1 Q663.1 1184.1 658.1 1184.1 H580.9 Q575.9 1184.1 575.9 1179.1Z" fill="#2c7be5"/><path d="M721.8 1034.6 H809.0 V1212.7 Q809.0 1217.7 804.0 1217.7 H726.8 Q721.8 1217.7 721.8 1212.7Z" fill="#1b3a63"/><path d="M819.5 1034.6 H906.7 V1212.7 Q906.7 1217.7 901.7 1217.7 H824.5 Q819.5 1217.7 819.5 1212.7Z" fill="#2c7be5"/><path d="M965.4 1034.6 H1052.6 V1198.8 Q1052.6 1203.8 1047.6 1203.8 H970.4 Q965.4 1203.8 965.4 1198.8Z" fill="#1b3a63"/><path d="M1063.1 1034.6 H1150.3 V1193.0 Q1150.3 1198.0 1145.3 1198.0 H1068.1 Q1063.1 1198.0 1063.1 1193.0Z" fill="#2c7be5"/><path d="M1209.0 1034.6 H1296.2 V1186.7 Q1296.2 1191.7 1291.2 1191.7 H1214.0 Q1209.0 1191.7 1209.0 1186.7Z" fill="#1b3a63"/><path d="M1306.7 1034.6 H1393.9 V1212.7 Q1393.9 1217.7 1388.9 1217.7 H1311.7 Q1306.7 1217.7 1306.7 1212.7Z" fill="#2c7be5"/><path d="M1452.6 1034.6 H1539.8 V1186.0 Q1539.8 1191.0 1534.8 1191.0 H1457.6 Q1452.6 1191.0 1452.6 1186.0Z" fill="#1b3a63"/><path d="M1550.3 1034.6 H1637.5 V1220.6 Q1637.5 1225.6 1632.5 1225.6 H1555.3 Q1550.3 1225.6 1550.3 1220.6Z" fill="#2c7be5"/><path d="M1696.2 1034.6 H1783.4 V1193.9 Q1783.4 1198.9 1778.4 1198.9 H1701.2 Q1696.2 1198.9 1696.2 1193.9Z" fill="#1b3a63"/><path d="M1793.9 1034.6 H1881.1 V1225.9 Q1881.1 1230.9 1876.1 1230.9 H1798.9 Q1793.9 1230.9 1793.9 1225.9Z" fill="#2c7be5"/><path d="M1939.8 1034.6 H2027.0 V1188.6 Q2027.0 1193.6 2022.0 1193.6 H1944.8 Q1939.8 1193.6 1939.8 1188.6Z" fill="#1b3a63"/><path d="M2037.5 1034.6 H2124.7 V1201.8 Q2124.7 1206.8 2119.7 1206.8 H2042.5 Q2037.5 1206.8 2037.5 1201.8Z" fill="#2c7be5"/><path d="M2183.4 1034.6 H2270.6 V1116.0 Q2270.6 1121.0 2265.6 1121.0 H2188.4 Q2183.4 1121.0 2183.4 1116.0Z" fill="#1b3a63"/><path d="M2281.1 1034.6 H2368.3 V1118.4 Q2368.3 1123.4 2363.3 1123.4 H2286.1 Q2281.1 1123.4 2281.1 1118.4Z" fill="#2c7be5"/><path d="M570.3 1233.1 C588.6 1230.5 777.7 1200.7 814.2 1198.6 C850.7 1196.5 1021.1 1206.8 1057.6 1204.7 C1094.1 1202.6 1264.5 1174.2 1301 1171 C1337.5 1167.8 1508.2 1162.0 1544.7 1161.6 C1581.2 1161.2 1751.5 1164.3 1788 1166 C1824.5 1167.7 1995.1 1182.7 2031.6 1184.8 C2068.1 1186.9 2256.7 1193.3 2275 1194" fill="none" stroke="#1a1a1a" stroke-width="3.8"/><circle cx="570.3" cy="1233.1" r="3.8" fill="#d0d0d0" stroke="#1a1a1a" stroke-width="1.6"/><circle cx="814.2" cy="1198.6" r="3.8" fill="#d0d0d0" stroke="#1a1a1a" stroke-width="1.6"/><circle cx="1057.6" cy="1204.7" r="3.8" fill="#d0d0d0" stroke="#1a1a1a" stroke-width="1.6"/><circle cx="1301" cy="1171" r="3.8" fill="#d0d0d0" stroke="#1a1a1a" stroke-width="1.6"/><circle cx="1544.7" cy="1161.6" r="3.8" fill="#d0d0d0" stroke="#1a1a1a" stroke-width="1.6"/><circle cx="1788" cy="1166" r="3.8" fill="#d0d0d0" stroke="#1a1a1a" stroke-width="1.6"/><circle cx="2031.6" cy="1184.8" r="3.8" fill="#d0d0d0" stroke="#1a1a1a" stroke-width="1.6"/><circle cx="2275" cy="1194" r="3.8" fill="#d0d0d0" stroke="#1a1a1a" stroke-width="1.6"/></svg>
<div class="t" style="left:334px;width:100px;text-align:right;top:1058.7px;font-size:16px;color:#333">-50,000</div>
<div class="t" style="left:334px;width:100px;text-align:right;top:1123.9px;font-size:16px;color:#333">-150,000</div>
<div class="t" style="left:334px;width:100px;text-align:right;top:1189.9px;font-size:16px;color:#333">-250,000</div>
<div class="t" style="left:2412px;top:1026.0px;font-size:16px;color:#333">100%</div>
<div class="t" style="left:2412px;top:1058.8px;font-size:16px;color:#333">80%</div>
<div class="t" style="left:2412px;top:1091.5px;font-size:16px;color:#333">60%</div>
<div class="t" style="left:2412px;top:1124.3px;font-size:16px;color:#333">40%</div>
<div class="t" style="left:2412px;top:1157.0px;font-size:16px;color:#333">20%</div>
<div class="t" style="left:2412px;top:1189.8px;font-size:16px;color:#333">0%</div>
<div class="t" style="left:2412px;top:1222.5px;font-size:16px;color:#333">-20%</div>
<div class="t" style="left:510.29999999999995px;width:120px;text-align:center;top:1199.6px;font-size:16px;color:#222">-21.18%</div>
<div class="t" style="left:754.2px;width:120px;text-align:center;top:1165.1px;font-size:16px;color:#222">-0.05%</div>
<div class="t" style="left:997.5999999999999px;width:120px;text-align:center;top:1171.2px;font-size:16px;color:#222">-3.86%</div>
<div class="t" style="left:1241px;width:120px;text-align:center;top:1137.5px;font-size:16px;color:#222">16.60%</div>
<div class="t" style="left:1484.7px;width:120px;text-align:center;top:1128.1px;font-size:16px;color:#222">22.53%</div>
<div class="t" style="left:1728px;width:120px;text-align:center;top:1132.5px;font-size:16px;color:#222">19.83%</div>
<div class="t" style="left:1971.6px;width:120px;text-align:center;top:1151.3px;font-size:16px;color:#222">8.34%</div>
<div class="t" style="left:2215px;width:120px;text-align:center;top:1160.5px;font-size:16px;color:#222">2.61%</div>
</body></html>
